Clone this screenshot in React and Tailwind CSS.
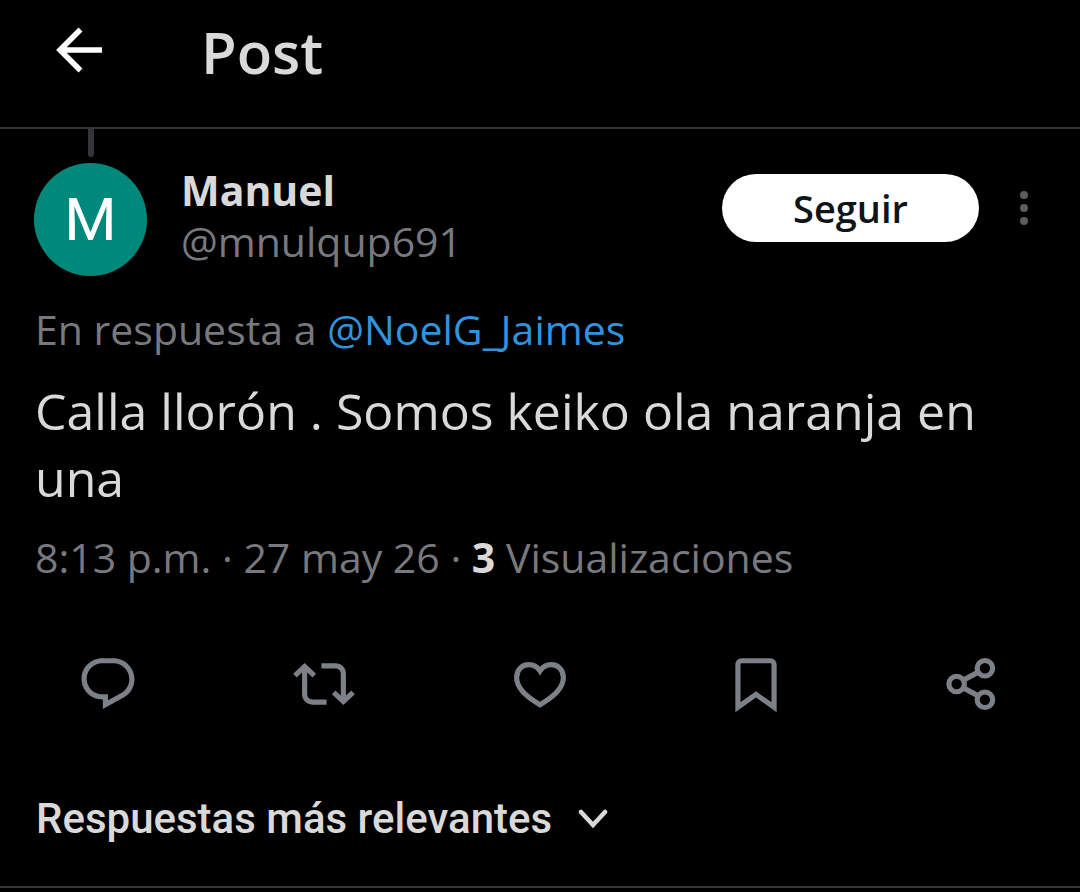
const actions = [
  {
    label: 'Responder',
    icon: (
      <path
        d="M1.751 10c0-4.42 3.584-8 8.005-8h4.366c4.49 0 8.129 3.64 8.129 8.13 0 2.96-1.607 5.68-4.196 7.11l-8.054 4.46v-3.69h-.067c-4.49.1-8.183-3.51-8.183-8.01zm8.005-6c-3.317 0-6.005 2.69-6.005 6 0 3.37 2.77 6.08 6.138 6.01l.351-.01h1.761v2.3l5.087-2.81c1.951-1.08 3.163-3.13 3.163-5.36 0-3.39-2.744-6.13-6.129-6.13H9.756z"
        fill="currentColor"
      />
    ),
  },
  {
    label: 'Repostear',
    icon: (
      <path
        d="M4.5 3.88l4.432 4.14-1.364 1.46L5.5 7.55V16c0 1.1.896 2 2 2H13v2H7.5c-2.209 0-4-1.79-4-4V7.55L1.432 9.48.068 8.02 4.5 3.88zM16.5 6H11V4h5.5c2.209 0 4 1.79 4 4v8.45l2.068-1.93 1.364 1.46-4.432 4.14-4.432-4.14 1.364-1.46 2.068 1.93V8c0-1.1-.896-2-2-2z"
        fill="currentColor"
      />
    ),
  },
  {
    label: 'Me gusta',
    icon: (
      <path
        d="M12 6.9C10.9 5.3 9.3 4.5 7.6 4.5C5 4.5 2.95 6.6 2.95 9.5C2.95 13.6 6.7 17 12 20C17.3 17 21.05 13.6 21.05 9.5C21.05 6.6 19 4.5 16.4 4.5C14.7 4.5 13.1 5.3 12 6.9Z"
        fill="none"
        stroke="currentColor"
        strokeWidth="2"
      />
    ),
  },
  {
    label: 'Guardar',
    icon: (
      <path
        d="M4 4.5C4 3.12 5.119 2 6.5 2h11C18.881 2 20 3.12 20 4.5v18.44l-8-5.71-8 5.71V4.5zM6.5 4c-.276 0-.5.22-.5.5v14.56l6-4.29 6 4.29V4.5c0-.28-.224-.5-.5-.5h-11z"
        fill="currentColor"
      />
    ),
  },
  {
    label: 'Compartir',
    icon: (
      <g fill="none" stroke="currentColor" strokeWidth="2">
        <circle cx="6.05" cy="12" r="3" />
        <circle cx="17" cy="5.9" r="3" />
        <circle cx="17" cy="18.1" r="3" />
        <path d="M8.5 10.6l5.9-3.2M8.5 13.4l5.9 3.2" />
      </g>
    ),
  },
];

function Header() {
  return (
    <header className="flex items-center h-[129px] pb-6 pl-12 border-b-2 border-[#353537]">
      <button type="button" aria-label="Atrás" className="text-white">
        <svg className="block w-16 h-16" viewBox="0 0 64 64" fill="none" stroke="currentColor" strokeWidth="5.5">
          <path d="M32.5 9.5L12 30l20.5 20.5M12 30H54" />
        </svg>
      </button>
      <h1 className="ml-[89px] text-[58px] leading-[64px] font-semibold">Post</h1>
    </header>
  );
}

function Author() {
  return (
    <div className="flex items-start pl-[34px] pr-11">
      <div className="shrink-0 flex flex-col items-center">
        <div className="w-1.5 h-7 rounded-b-sm bg-[#353537]" />
        <div className="mt-1.5 flex items-center justify-center size-[113px] rounded-full bg-[#00897b] text-white text-[60px] leading-none font-[Roboto,sans-serif]">
          M
        </div>
      </div>
      <div className="flex-1 min-w-0 ml-[34px] mt-9 text-[41px] leading-[51px]">
        <p className="font-bold">Manuel</p>
        <p className="text-[#77797e]">@mnulqup691</p>
      </div>
      <button type="button" className="shrink-0 mt-[45px] w-[257px] h-[68px] rounded-full bg-white text-[#0f1419] text-[38px] leading-none font-semibold">
        Seguir
      </button>
      <button type="button" aria-label="Más opciones" className="shrink-0 mt-[45px] ml-[33px] text-[#5c5c5e]">
        <svg className="block w-6 h-[68px]" viewBox="0 0 24 68" fill="currentColor">
          <circle cx="12" cy="21" r="4" />
          <circle cx="12" cy="34" r="4" />
          <circle cx="12" cy="47" r="4" />
        </svg>
      </button>
    </div>
  );
}

export default function App() {
  return (
    <div className="min-h-screen bg-black text-[#d9d9d9] font-['Open_Sans',sans-serif]">
      <Header />
      <main>
        <article>
          <Author />
          <div className="px-[35px]">
            <p className="mt-7 text-[41px] leading-[50px] text-[#77797e]">
              En respuesta a <a href="#NoelG_Jaimes" className="text-[#2f93dd]">@NoelG_Jaimes</a>
            </p>
            <p className="mt-6 text-[50px] leading-[67px]">Calla llorón . Somos keiko ola naranja en una</p>
            <p className="mt-5 text-[41px] leading-[50px] text-[#77797e]">
              8:13 p.m. · 27 may 26 · <span className="font-bold text-[#d9d9d9]">3</span> Visualizaciones
            </p>
          </div>
          <div className="mt-[71px] grid grid-cols-5 justify-items-center text-[#7c8187]">
            {actions.map((action) => (
              <button key={action.label} type="button" aria-label={action.label}>
                <svg className="block size-[62px]" viewBox="0 0 24 24">{action.icon}</svg>
              </button>
            ))}
          </div>
        </article>
        <div className="mt-[73px] px-9 pb-9 border-b-2 border-[#353537]">
          <button type="button" className="flex items-center gap-6 text-[42px] leading-[62px] font-medium font-[Roboto,sans-serif]">
            Respuestas más relevantes
            <svg className="block w-8 h-5" viewBox="0 0 32 20" fill="none" stroke="currentColor" strokeWidth="4.5" strokeLinecap="round">
              <path d="M5 3l12 13L29 3" />
            </svg>
          </button>
        </div>
      </main>
    </div>
  );
}
